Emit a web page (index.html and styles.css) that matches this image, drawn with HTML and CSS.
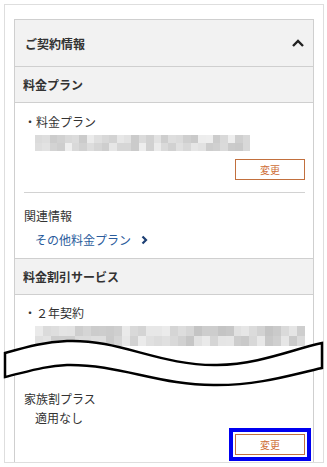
FILE: index.html
```html
<!DOCTYPE html>
<html>
  <head>
  <meta charset="utf-8">
  <link rel="stylesheet" href="styles.css">
  </head>
  <body>
    <div class="frame">
      <div class="card">
        <div class="card-head">
          <span>ご契約情報</span>
          <svg class="chev-up" width="12" height="8" viewBox="0 0 12 8"><polyline points="1,7 6,2 11,7" /></svg>
        </div>
        <div class="sec-head">料金プラン</div>
        <div class="sec-body first">
          <p class="item">・料金プラン</p>
          <div class="mosaic m1" data-cells="58" data-seed="7" data-lo="200" data-hi="240"></div>
          <div class="actions"><button class="btn">変更</button></div>
          <hr class="rule">
          <p class="label">関連情報</p>
          <a class="link" href="#">その他料金プラン
            <svg width="7" height="10" viewBox="0 0 7 10"><polyline points="1.5,1.5 5,5 1.5,8.5" /></svg>
          </a>
        </div>
        <div class="sec-head">料金割引サービス</div>
        <div class="sec-body second">
          <p class="item">・２年契約</p>
          <div class="mosaic m2" data-cells="68" data-seed="19" data-lo="196" data-hi="236"></div>
          <p class="label later">家族割プラス</p>
          <p class="value">適用なし</p>
          <div class="actions"><button class="btn marked">変更</button></div>
        </div>
      </div>
    </div>

    <!-- "omitted" band drawn over the middle of the card -->
    <svg class="cut" width="327" height="467" viewBox="0 0 327 467">
      <path d="M5,353 C30,346 45,342 67,341 C120,339 160,366 217,365 C260,364 290,350 322,343 L322,368 C290,375 260,385 217,385 C160,386 120,364 67,365 C45,366 30,371 5,377 Z" />
    </svg>

    <script>
      // pixelated placeholder for the masked values
      var boxes = document.querySelectorAll(".mosaic");
      for (var b = 0; b < boxes.length; b++) {
        var el = boxes[b];
        var seed = +el.dataset.seed, lo = +el.dataset.lo, hi = +el.dataset.hi;
        for (var i = 0; i < +el.dataset.cells; i++) {
          seed = (seed * 9301 + 49297) % 233280;
          var v = Math.floor(lo + (seed / 233280) * (hi - lo));
          var cell = document.createElement("i");
          cell.style.background = "rgb(" + v + "," + v + "," + v + ")";
          el.appendChild(cell);
        }
      }
    </script>
  </body>
</html>
```

FILE: styles.css
```css
body {
  margin: 0;
  width: 327px;
  height: 467px;
  position: relative;
  background: #fff;
  font-family: "Noto Sans CJK JP", "Noto Sans", sans-serif;
  font-size: 12px;
  color: #333;
}
p {
  margin: 0;
}
.frame {
  position: absolute;
  left: 4px;
  top: 4px;
  width: 320px;
  height: 459px;
  box-sizing: border-box;
  border: 1px solid #dedede;
  padding: 14px 9px 0 9px;
  overflow: hidden;
}
.card {
  border: 1px solid #cfcfcf;
  height: 600px;
}
.card-head {
  height: 46px;
  background: #f2f2f2;
  border-bottom: 1px solid #cfcfcf;
  display: flex;
  align-items: center;
  justify-content: space-between;
  padding: 0 9px 0 10px;
  font-weight: bold;
}
.chev-up polyline {
  fill: none;
  stroke: #222;
  stroke-width: 2.4;
}
.sec-head {
  height: 35px;
  line-height: 35px;
  background: #f2f2f2;
  border-bottom: 1px solid #cfcfcf;
  padding-left: 8px;
  font-weight: bold;
}
.sec-body + .sec-head {
  border-top: 1px solid #cfcfcf;
}
.sec-body {
  padding: 0 8px 0 9px;
}
.sec-body.first {
  padding-top: 10px;
  padding-bottom: 6px;
}
.sec-body.second {
  padding-top: 9px;
}
.item,
.value {
  line-height: 18px;
}
.value {
  margin-top: 1px;
  padding-left: 11px;
}
.mosaic {
  display: grid;
  margin: 4px 0 0 11px;
}
.mosaic i {
  display: block;
}
.m1 {
  width: 215px;
  height: 16px;
  grid-template-columns: repeat(29, 1fr);
}
.m2 {
  width: 270px;
  height: 20px;
  grid-template-columns: repeat(34, 1fr);
}
.actions {
  display: flex;
  justify-content: flex-end;
}
.first .actions {
  margin-top: 8px;
}
.second .actions {
  margin-top: 7px;
}
.btn {
  width: 70px;
  height: 21px;
  padding: 0;
  background: #fff;
  border: 1px solid #c2703e;
  border-radius: 0;
  color: #cf6f38;
  font-family: inherit;
  font-size: 10px;
}
.btn.marked {
  outline: 4px solid #0000f0;
  outline-offset: 2px;
}
.rule {
  margin: 12px 0 0 0;
  border: none;
  border-top: 1px solid #d2d2d2;
}
.label {
  margin-top: 11px;
  line-height: 24px;
}
.label.later {
  margin-top: 44px;
  line-height: 18px;
}
.link {
  display: flex;
  align-items: center;
  gap: 10px;
  padding-left: 11px;
  line-height: 24px;
  color: #2a5c9c;
  text-decoration: none;
}
.link polyline {
  fill: none;
  stroke: #1d3f74;
  stroke-width: 2.2;
}
.cut {
  position: absolute;
  left: 0;
  top: 0;
}
.cut path {
  fill: #fff;
  stroke: #000;
  stroke-width: 2.5;
}
```
